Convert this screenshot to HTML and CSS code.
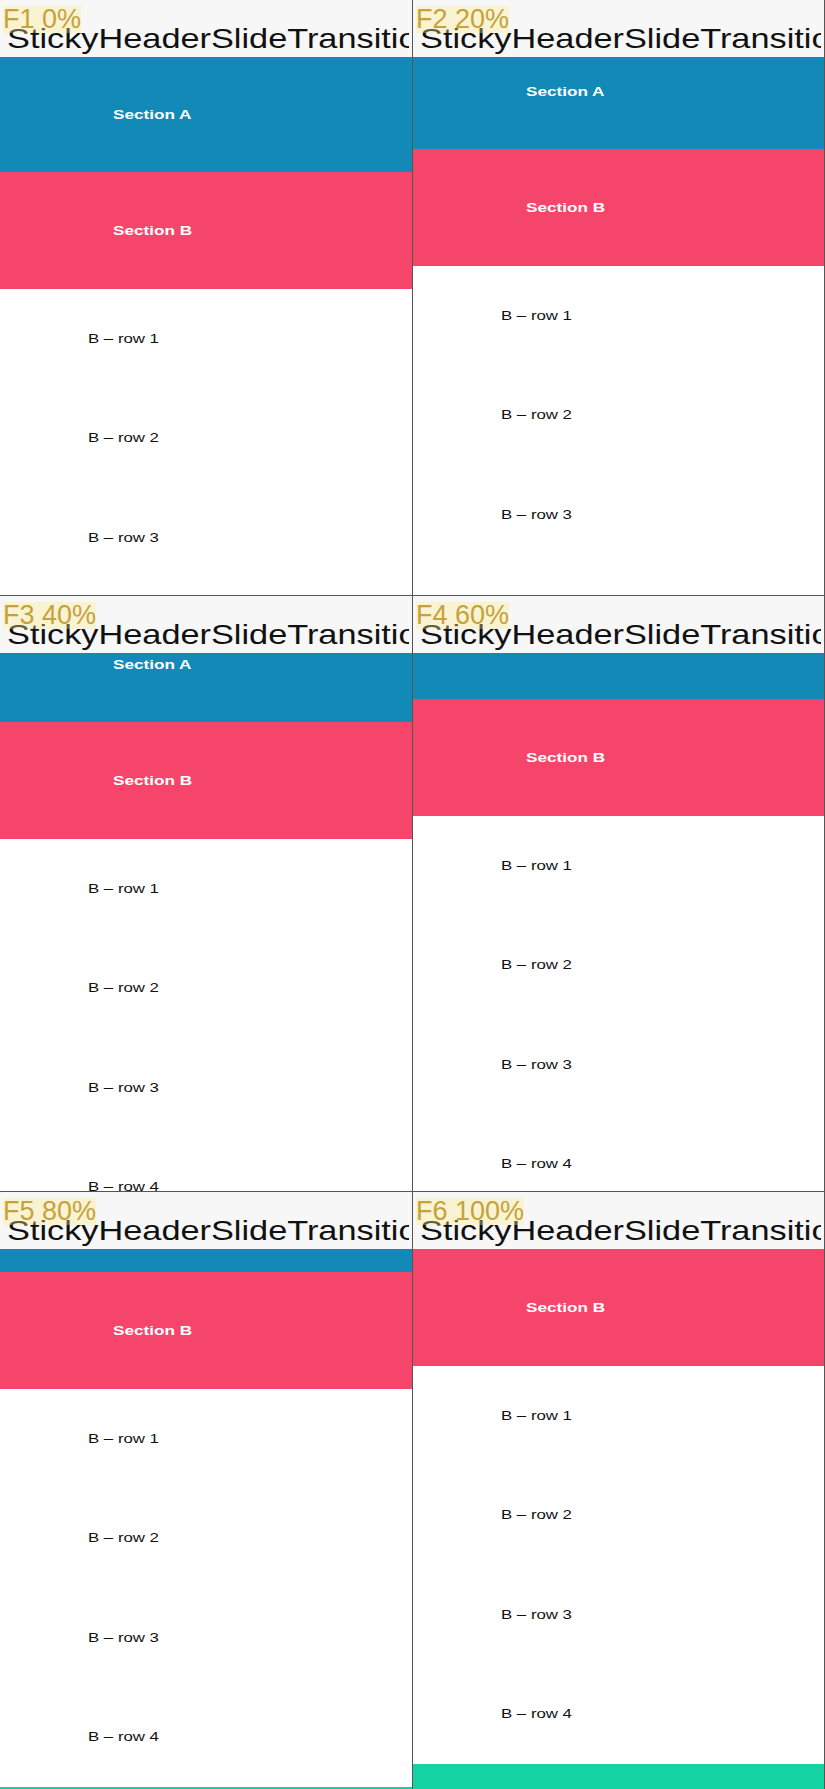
FILE: index.html
```html
<!DOCTYPE html>
<html lang="en">
<head>
  <meta charset="UTF-8" />
  <title>StickyHeaderSlideTransition</title>
  <meta name="viewport" content="width=device-width, initial-scale=1" />
  <link rel="stylesheet" href="styles.css">
</head>
<body>
  <div class="board">

    <div class="frame f1">
      <div class="bar">
        <div class="title"><span>StickyHeaderSlideTransition</span></div>
        <span class="tag">F1 0%</span>
      </div>
      <div class="view">
        <div class="track">
          <div class="sec sec-a"><span>Section A</span></div>
          <div class="sec sec-b"><span>Section B</span></div>
          <div class="row"><span>B – row 1</span></div>
          <div class="row"><span>B – row 2</span></div>
          <div class="row"><span>B – row 3</span></div>
          <div class="row"><span>B – row 4</span></div>
          <div class="sec sec-c"><span>Section C</span></div>
        </div>
      </div>
    </div>

    <div class="frame f2">
      <div class="bar">
        <div class="title"><span>StickyHeaderSlideTransition</span></div>
        <span class="tag">F2 20%</span>
      </div>
      <div class="view">
        <div class="track">
          <div class="sec sec-a"><span>Section A</span></div>
          <div class="sec sec-b"><span>Section B</span></div>
          <div class="row"><span>B – row 1</span></div>
          <div class="row"><span>B – row 2</span></div>
          <div class="row"><span>B – row 3</span></div>
          <div class="row"><span>B – row 4</span></div>
          <div class="sec sec-c"><span>Section C</span></div>
        </div>
      </div>
    </div>

    <div class="frame f3">
      <div class="bar">
        <div class="title"><span>StickyHeaderSlideTransition</span></div>
        <span class="tag">F3 40%</span>
      </div>
      <div class="view">
        <div class="track">
          <div class="sec sec-a"><span>Section A</span></div>
          <div class="sec sec-b"><span>Section B</span></div>
          <div class="row"><span>B – row 1</span></div>
          <div class="row"><span>B – row 2</span></div>
          <div class="row"><span>B – row 3</span></div>
          <div class="row"><span>B – row 4</span></div>
          <div class="sec sec-c"><span>Section C</span></div>
        </div>
      </div>
    </div>

    <div class="frame f4">
      <div class="bar">
        <div class="title"><span>StickyHeaderSlideTransition</span></div>
        <span class="tag">F4 60%</span>
      </div>
      <div class="view">
        <div class="track">
          <div class="sec sec-a"><span>Section A</span></div>
          <div class="sec sec-b"><span>Section B</span></div>
          <div class="row"><span>B – row 1</span></div>
          <div class="row"><span>B – row 2</span></div>
          <div class="row"><span>B – row 3</span></div>
          <div class="row"><span>B – row 4</span></div>
          <div class="sec sec-c"><span>Section C</span></div>
        </div>
      </div>
    </div>

    <div class="frame f5">
      <div class="bar">
        <div class="title"><span>StickyHeaderSlideTransition</span></div>
        <span class="tag">F5 80%</span>
      </div>
      <div class="view">
        <div class="track">
          <div class="sec sec-a"><span>Section A</span></div>
          <div class="sec sec-b"><span>Section B</span></div>
          <div class="row"><span>B – row 1</span></div>
          <div class="row"><span>B – row 2</span></div>
          <div class="row"><span>B – row 3</span></div>
          <div class="row"><span>B – row 4</span></div>
          <div class="sec sec-c"><span>Section C</span></div>
        </div>
      </div>
    </div>

    <div class="frame f6">
      <div class="bar">
        <div class="title"><span>StickyHeaderSlideTransition</span></div>
        <span class="tag">F6 100%</span>
      </div>
      <div class="view">
        <div class="track">
          <div class="sec sec-a"><span>Section A</span></div>
          <div class="sec sec-b"><span>Section B</span></div>
          <div class="row"><span>B – row 1</span></div>
          <div class="row"><span>B – row 2</span></div>
          <div class="row"><span>B – row 3</span></div>
          <div class="row"><span>B – row 4</span></div>
          <div class="sec sec-c"><span>Section C</span></div>
        </div>
      </div>
    </div>

  </div>
</body>
</html>
```

FILE: styles.css
```css
:root {
  font-family: 'Liberation Sans', Arial, sans-serif;
}
html, body {
  margin: 0; padding: 0;
  background: #fff;
}
.board {
  display: grid;
  grid-template-columns: 413px 412px;
  grid-template-rows: 596px 596px 597px;
}
.frame {
  display: flex;
  flex-direction: column;
  overflow: hidden;
  box-sizing: border-box;
  border-right: 1px solid #555;
  border-bottom: 1px solid #555;
}
.f5, .f6 {
  border-bottom: none;
}

/* top bar with the frame tag on top of it */
.bar {
  position: relative;
  flex: none;
  height: 57px;
  padding-left: 7px;
  background: #f7f7f7;
  overflow: hidden;
}
.title {
  margin-right: 3px;
  padding-top: 23px;
  font-size: 28px;
  line-height: 32px;
  color: #111;
  white-space: nowrap;
  overflow: hidden;
}
.title span {
  display: inline-block;
  transform: scaleX(1.225);
  transform-origin: left center;
}
.tag {
  position: absolute;
  left: 3px;
  top: 6px;
  font-size: 27px;
  line-height: 27px;
  color: #c6a23c;
  background: rgba(255, 236, 140, 0.35);
}

/* scrolling list */
.view {
  flex: 1;
  overflow: hidden;
}
.f2 .track { margin-top: -23px; }
.f3 .track { margin-top: -46px; }
.f4 .track { margin-top: -69px; }
.f5 .track { margin-top: -92px; }
.f6 .track { margin-top: -115px; }

.sec {
  display: flex;
  align-items: center;
  height: 117px;
  padding-left: 113px;
  font-size: 12px;
  font-weight: bold;
  color: #fff;
}
.sec span {
  display: inline-block;
  transform: scaleX(1.43);
  transform-origin: left center;
}
.sec-a { height: 115px; background: #1389b7; }
.sec-b { background: #f6456a; }
.sec-c { background: #12d3a1; }

.row {
  display: flex;
  align-items: center;
  height: 99.5px;
  padding-left: 88px;
  font-size: 12px;
  color: #111;
}
.row span {
  display: inline-block;
  transform: scaleX(1.4);
  transform-origin: left center;
}
```
